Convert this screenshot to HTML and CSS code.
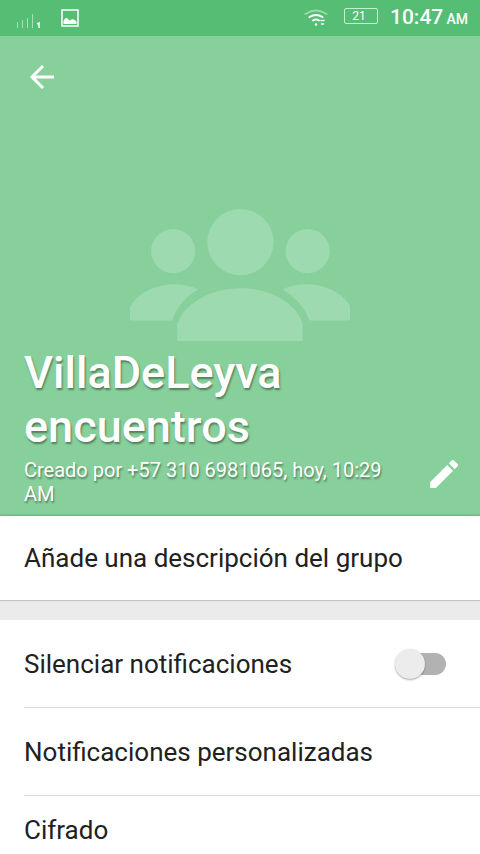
FILE: index.html
```html
<!DOCTYPE html>
<html lang="es">
<head>
<meta charset="utf-8">
<meta name="viewport" content="width=device-width, initial-scale=1">
<title>VillaDeLeyva encuentros</title>
<link rel="stylesheet" href="styles.css">
</head>
<body>
<div class="status">
  <svg class="signal" width="26" height="20" viewBox="0 0 26 20" aria-hidden="true">
    <path d="M1.5 12v6M6.500 10v8M11.500 8v10M16.500 4v14" stroke="#a9e0b8" stroke-width="1" fill="none"/>
    <path d="M21 14l2-1v5" stroke="#fff" stroke-width="1.500" fill="none"/>
  </svg>
  <svg class="picture" width="20" height="20" viewBox="0 0 20 20" aria-hidden="true">
    <rect x="2" y="2" width="16" height="16" fill="none" stroke="#fff" stroke-width="1.500"/>
    <path d="M3.500 16v-3q2-5 5-1.500l1.500 1q3-3 6.500 1V16z" fill="#fff"/>
  </svg>
  <div class="status-right">
    <svg width="24" height="20" viewBox="0 0 24 20" fill="none" stroke-linecap="round" aria-hidden="true">
      <path d="M1.500 6Q12-1 22.500 6" stroke="#9bdcad" stroke-width="2"/>
      <path d="M5.500 9q6.500-4 13 0M9 12.500q3-2 6 0" stroke="#fff" stroke-width="2"/>
      <circle cx="12" cy="16.500" r="1.200" fill="#fff"/>
      <path d="M17 12.500h3M17.500 16h2" stroke="#fff" stroke-width="1.500"/>
    </svg>
    <span class="battery">21</span>
    <span class="clock">10:47 <small>AM</small></span>
  </div>
</div>

<header class="hero">
  <svg class="people" viewBox="0 0 220 132" aria-hidden="true">
    <g fill="#9edaaf">
      <circle cx="110" cy="33" r="33"/>
      <circle cx="43" cy="42" r="22"/>
      <circle cx="177" cy="42" r="22"/>
      <path d="M47 132v-17C54 94 80 79 110 79s56 15 62 36v17z"/>
      <path d="M0 111V98C7 84 26 75 44 75q12 0 24 5Q49 91 42 111z"/>
      <path d="M220 111V98C213 84 194 75 176 75q-12 0-24 5 19 11 27 31z"/>
    </g>
  </svg>
  <button class="icon-button back" type="button" aria-label="Atrás">
    <svg width="26" height="26" viewBox="0 0 26 26" fill="none" stroke="#fff" stroke-width="3" aria-hidden="true">
      <path d="M25 13H3M14 2L3 13l11 11"/>
    </svg>
  </button>
  <div class="caption">
    <div class="caption-text">
      <h1>VillaDeLeyva encuentros</h1>
      <p>Creado por +57 310 6981065, hoy, 10:29 AM</p>
    </div>
    <button class="icon-button edit" type="button" aria-label="Editar">
      <svg width="28" height="28" viewBox="3 3 18 18" fill="#fff" aria-hidden="true">
        <path d="M3 17.250V21h3.750L17.810 9.940l-3.750-3.750L3 17.250zM20.710 7.040a1 1 0 0 0 0-1.410l-2.340-2.340a1 1 0 0 0-1.410 0l-1.830 1.830 3.750 3.750 1.830-1.830z"/>
      </svg>
    </button>
  </div>
</header>

<main>
  <section class="card description">
    <button class="row" type="button">Añade una descripción del grupo</button>
  </section>
  <section class="card settings">
    <label class="row" for="mute">Silenciar notificaciones
      <input class="switch" id="mute" type="checkbox" role="switch">
    </label>
    <button class="row" type="button">Notificaciones personalizadas</button>
    <button class="row last" type="button">Cifrado</button>
  </section>
</main>
</body>
</html>
```
FILE: styles.css
```css
* {
  box-sizing: border-box;
}

body {
  margin: 0;
  background: #ebebeb;
  color: #212121;
  font-family: Roboto, "Liberation Sans", sans-serif;
}

button {
  border: 0;
  background: none;
  color: inherit;
  font: inherit;
  text-align: left;
}

.status {
  display: flex;
  align-items: center;
  height: 36px;
  padding: 0 12px 0 16px;
  background: #55bd74;
  color: #fff;
}

.signal {
  margin-top: 4px;
}

.picture {
  margin-left: 18px;
}

.status-right {
  display: flex;
  align-items: center;
  margin-left: auto;
}

.battery {
  width: 34px;
  height: 16px;
  margin: 0 12px 4px 16px;
  padding-right: 4px;
  border: 1px solid #c9edd3;
  border-radius: 2px;
  font-size: 12px;
  line-height: 15px;
  text-align: center;
}

.clock {
  font-size: 21px;
  font-weight: 500;
  line-height: 36px;
}

.clock small {
  margin-left: -2px;
  font-size: 14px;
}

.hero {
  position: relative;
  display: flex;
  flex-direction: column;
  justify-content: space-between;
  min-height: 480px;
  padding: 28px 20px 10px 24px;
  background: #87d09b;
  color: #fff;
}

.people {
  position: absolute;
  top: 36%;
  left: 27%;
  width: 46%;
}

.icon-button {
  display: block;
  flex: none;
  padding: 0;
}

.icon-button svg {
  display: block;
}

.back {
  margin-left: 5px;
  align-self: flex-start;
}

.caption {
  position: relative;
  display: flex;
  align-items: flex-end;
  justify-content: space-between;
  gap: 28px;
  text-shadow: 1px 2px 2px rgba(0, 0, 0, 0.4);
}

h1 {
  margin: 0 0 4px;
  font-size: 45px;
  font-weight: 500;
  line-height: 54px;
}

.caption p {
  margin: 0;
  font-size: 20px;
  line-height: 24px;
}

.edit {
  margin: 0 2px 18px 0;
}

.card {
  background: #fff;
}

.description {
  margin-bottom: 20px;
  box-shadow: 0 1px 1px #c4c4c4, 0 -1px 2px rgba(0, 0, 0, 0.2);
  position: relative;
}

.row {
  display: flex;
  align-items: center;
  justify-content: space-between;
  width: 100%;
  padding: 0 24px 0 0;
  min-height: 88px;
  border-bottom: 1px solid #d9d9d9;
  font-size: 26px;
  line-height: 32px;
}

.description .row {
  min-height: 84px;
  padding-left: 24px;
  border-bottom: 0;
}

.settings {
  padding-left: 24px;
}

.last {
  min-height: 0;
  padding-top: 18px;
  padding-bottom: 8px;
  border-bottom: 0;
}

.switch {
  position: relative;
  flex: none;
  width: 52px;
  height: 32px;
  margin: 0 10px 0 0;
  padding: 0;
  appearance: none;
}

.switch::before {
  content: "";
  position: absolute;
  inset: 5px 0 5px 8px;
  border-radius: 11px;
  background: #b2b2b2;
}

.switch::after {
  content: "";
  position: absolute;
  top: 1px;
  left: 1px;
  width: 30px;
  height: 30px;
  border-radius: 50%;
  background: #ececec;
  box-shadow: 0 1px 2px rgba(0, 0, 0, 0.35);
}

.switch:checked::after {
  left: 22px;
}
```
